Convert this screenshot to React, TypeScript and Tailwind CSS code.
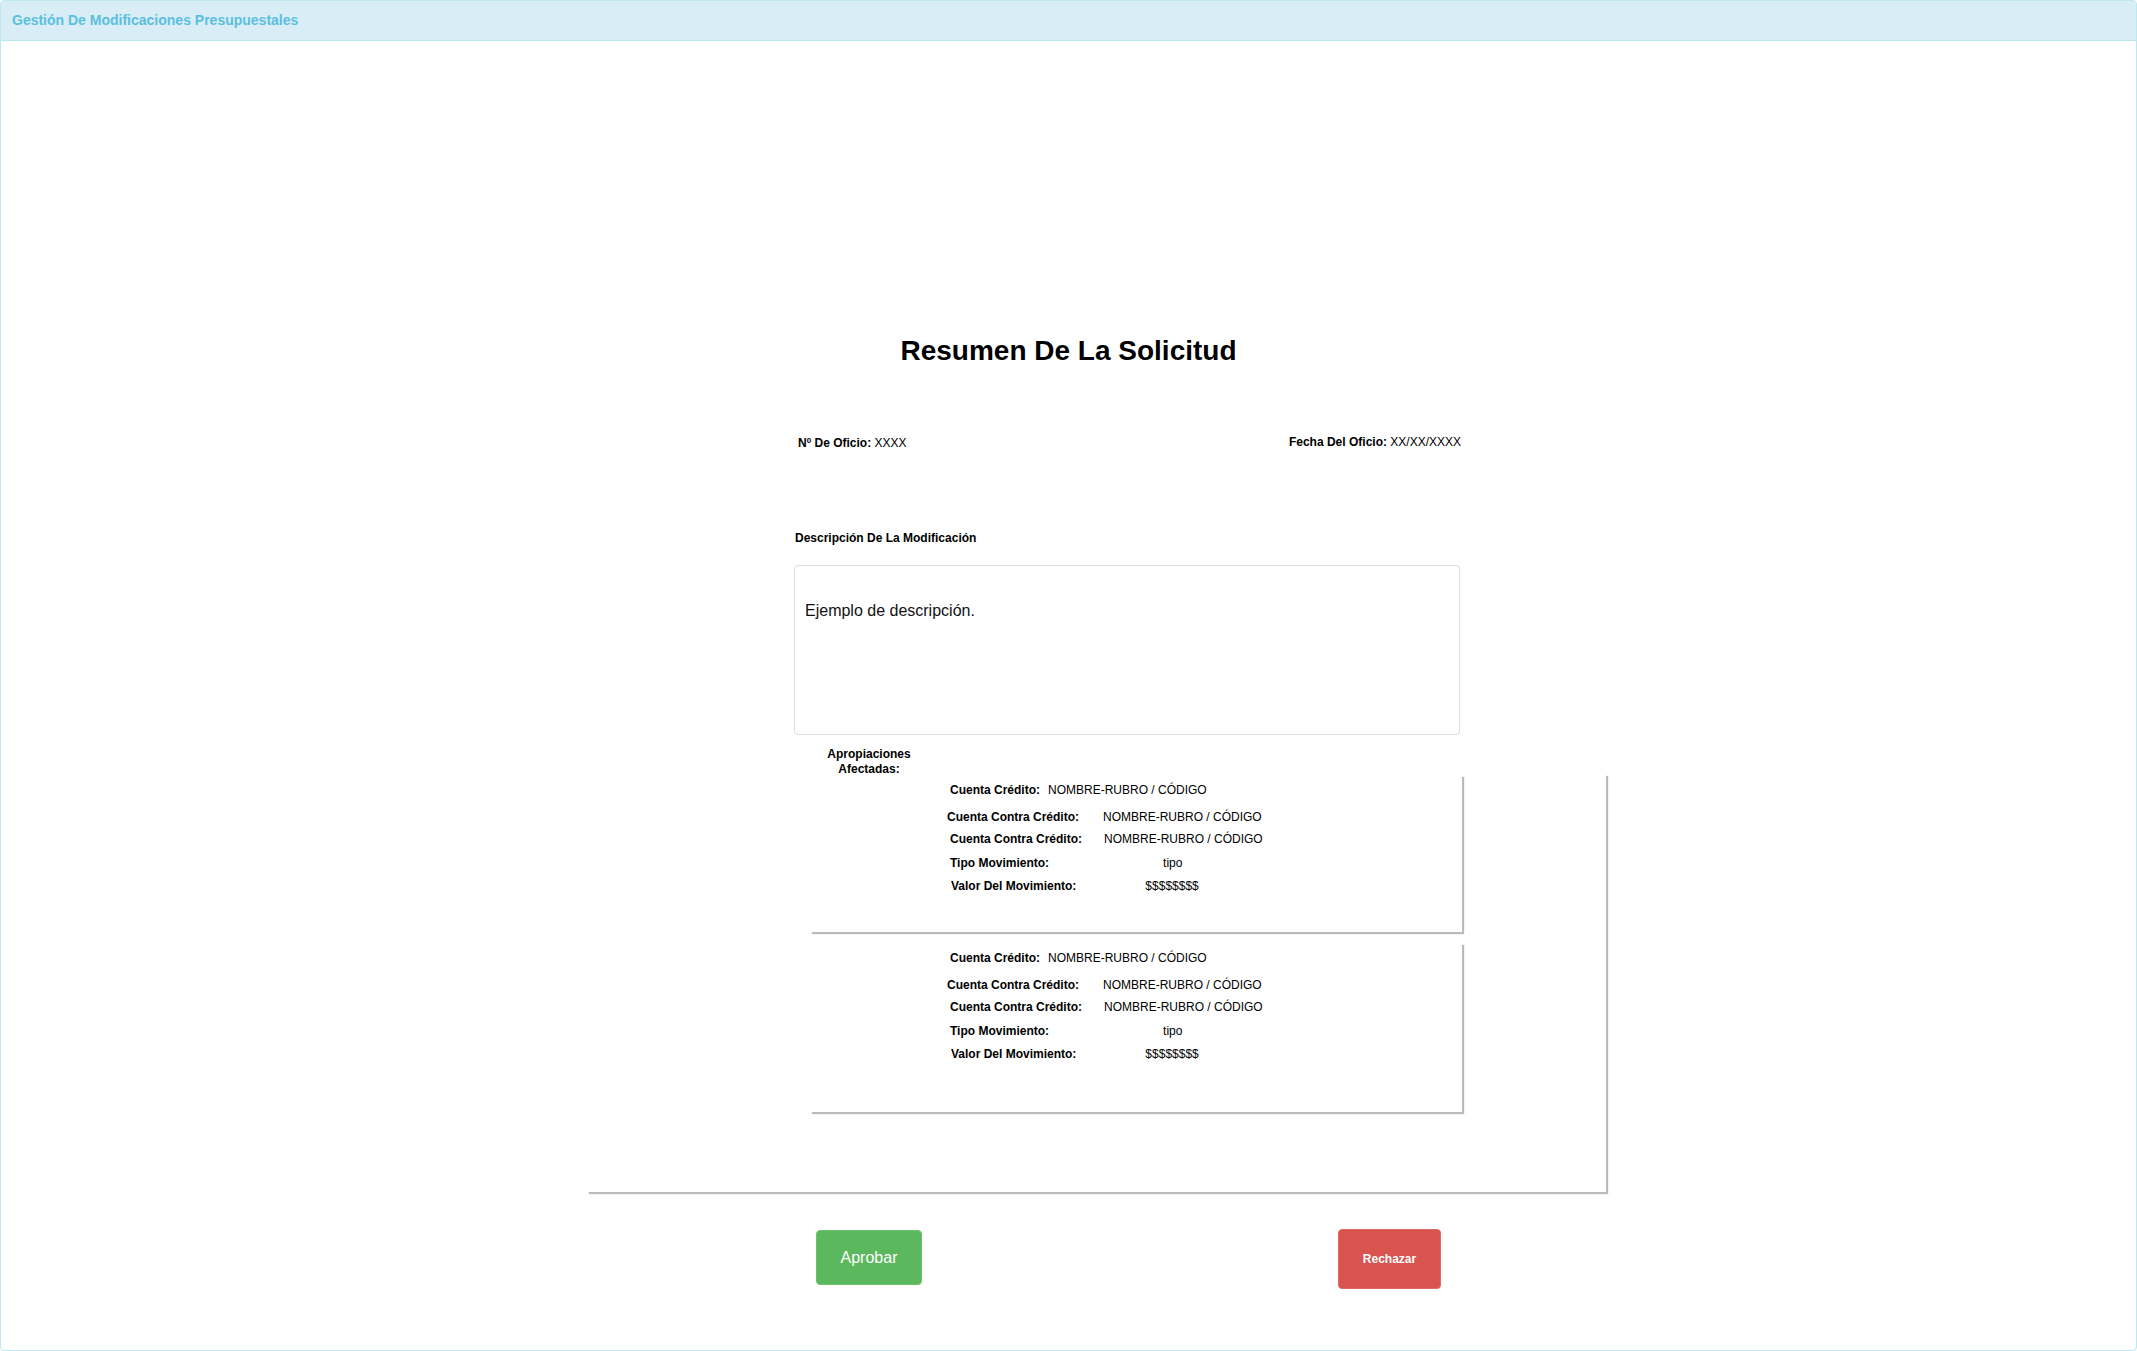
const rows = [
    { label: 'Cuenta Crédito:', value: 'NOMBRE-RUBRO / CÓDIGO', pl: 'pl-[140px]', ml: 'ml-[8px]', mt: 'mt-0' },
    { label: 'Cuenta Contra Crédito:', value: 'NOMBRE-RUBRO / CÓDIGO', pl: 'pl-[137px]', ml: 'ml-[24px]', mt: 'mt-[11px]' },
    { label: 'Cuenta Contra Crédito:', value: 'NOMBRE-RUBRO / CÓDIGO', pl: 'pl-[140px]', ml: 'ml-[22px]', mt: 'mt-[6px]' },
    { label: 'Tipo Movimiento:', value: 'tipo', pl: 'pl-[140px]', ml: 'ml-[114px]', mt: 'mt-[8px]' },
    { label: 'Valor Del Movimiento:', value: '$$$$$$$$', pl: 'pl-[141px]', ml: 'ml-[69px]', mt: 'mt-[7px]' },
]

const Apropiacion = ({ height }: { height: string }) => {
    return (
        <div className={`w-[652px] ${height} ml-[223px] bg-white pt-[7px] shadow-[2px_2px_1px_#bbbbbb]`}>
            {rows.map((row, idx) => (
                <div key={idx} className={`flex ${row.pl} ${row.mt} text-[12px] leading-4 whitespace-nowrap`}>
                    <span className="font-bold">{row.label}</span>
                    <span className={row.ml}>{row.value}</span>
                </div>
            ))}
        </div>
    )
}

const App = () => {
    return (
        <div className="w-full h-[1351px] bg-white text-black font-['Liberation_Sans',Arial,sans-serif]">
            <div className="h-full flex flex-col border border-[#bce8f1] rounded-[4px] overflow-hidden">
                {/* Header */}
                <div className="h-[40px] shrink-0 bg-[#d9edf7] border-b border-[#bce8f1] pl-[11px] flex items-center">
                    <h3 className="text-[14px] font-bold text-[#5bc0de]">Gestión De Modificaciones Presupuestales</h3>
                </div>

                <div className="flex flex-col">
                    <h1 className="mt-[294px] text-center text-[28px] leading-8 font-bold">Resumen De La Solicitud</h1>

                    {/* Datos del oficio */}
                    <div className="ml-[793px] w-[667px]">
                        <div className="mt-[68px] flex justify-between pl-[4px] text-[12px] leading-4">
                            <p><span className="font-bold">N<sup className="text-[8px]">0</sup> De Oficio: </span>XXXX</p>
                            <p className="-mt-[1px]"><span className="font-bold">Fecha Del Oficio: </span>XX/XX/XXXX</p>
                        </div>

                        <p className="mt-[79px] pl-[1px] text-[12px] leading-4 font-bold">Descripción De La Modificación</p>

                        <div className="mt-[19px] mr-[1px] h-[170px] border border-[#dddddd] rounded-[4px] pt-[35px] pl-[10px] text-[16px] leading-5 text-[#111]">
                            Ejemplo de descripción.
                        </div>

                        <p className="mt-[12px] ml-[25px] w-[100px] text-center text-[12px] leading-[15px] font-bold">
                            Apropiaciones<br />Afectadas:
                        </p>
                    </div>

                    {/* Apropiaciones */}
                    <div className="-mt-[3px] ml-[586px] w-[1019px] h-[418px] pt-[1px] bg-white shadow-[2px_2px_1px_#bbbbbb]">
                        <Apropiacion height="h-[157px]" />
                        <div className="h-[11px]"></div>
                        <Apropiacion height="h-[169px]" />
                    </div>

                    {/* Botones */}
                    <div className="mt-[37px] ml-[815px] flex items-start">
                        <button className="mt-[1px] w-[106px] h-[55px] rounded-[4px] bg-[#5cb85c] text-white text-[16px] border border-[#6fc36f]">Aprobar</button>
                        <button className="ml-[416px] w-[103px] h-[60px] rounded-[4px] bg-[#d9534f] text-white text-[12px] font-bold border border-[#e06a66]">Rechazar</button>
                    </div>
                </div>
            </div>
        </div>
    )
}

export default App
